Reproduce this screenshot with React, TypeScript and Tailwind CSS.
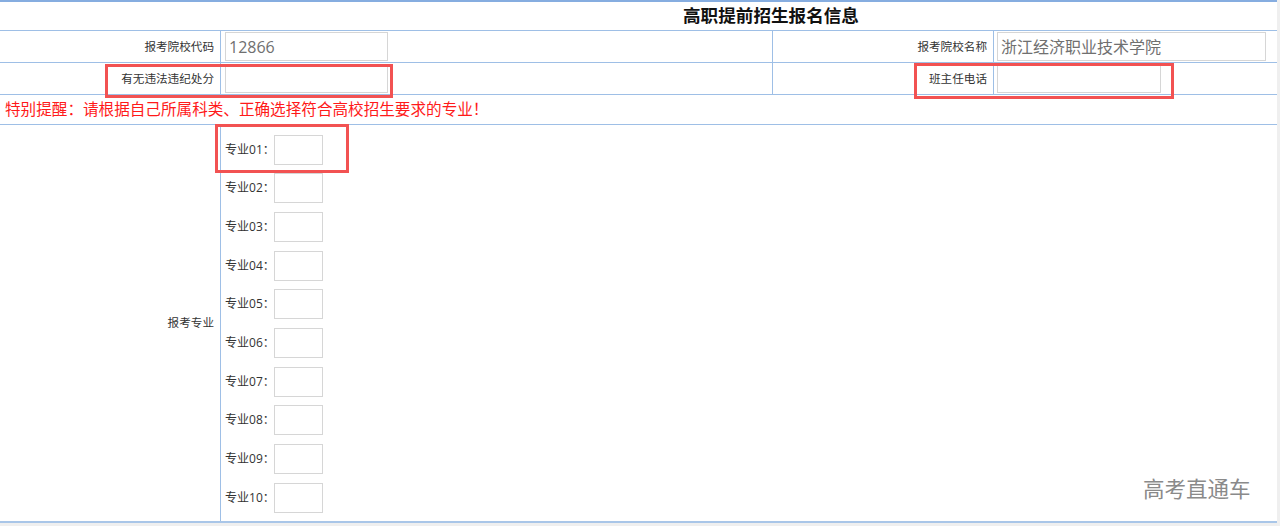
const font = "font-['Open_Sans','Noto_Sans_CJK_SC',sans-serif]";

const Label = ({ text, width = "w-[221px]" }: { text: string; width?: string }) => (
  <div
    className={`${width} shrink-0 h-full border-r border-[#9ebfe6] flex items-center justify-end pr-[6px] text-[11.6px] text-[#333] whitespace-nowrap`}
  >
    {text}
  </div>
);

const Field = ({ value, width }: { value?: string; width: string }) => (
  <div
    className={`${width} h-[29px] border border-[#d6d6d6] bg-white flex items-center pl-[3px] text-[16px] text-[#707070] leading-none whitespace-nowrap`}
  >
    {value}
  </div>
);

const majors = ["01", "02", "03", "04", "05", "06", "07", "08", "09", "10"];

export default function App() {
  return (
    <div className={`w-full h-[526px] bg-[#efefef] ${font}`}>
      <div className="relative w-[1277px] bg-white border-t-2 border-[#86ade0]">
        {/* title */}
        <div className="h-[29px] border-b border-[#9ebfe6] flex items-center pl-[683px] text-[17.6px] font-bold text-[#111] leading-none">
          高职提前招生报名信息
        </div>

        {/* row 1 */}
        <div className="h-[32px] border-b border-[#9ebfe6] flex items-center">
          <Label text="报考院校代码" />
          <div className="w-[552px] shrink-0 h-full border-r border-[#9ebfe6] flex items-center pl-[4px]">
            <Field value="12866" width="w-[163px]" />
          </div>
          <Label text="报考院校名称" />
          <div className="flex-1 h-full flex items-center pl-[3px]">
            <Field value="浙江经济职业技术学院" width="w-[269px]" />
          </div>
        </div>

        {/* row 2 */}
        <div className="h-[32px] border-b border-[#9ebfe6] flex items-center">
          <Label text="有无违法违纪处分" />
          <div className="w-[552px] shrink-0 h-full border-r border-[#9ebfe6] flex items-center pl-[4px]">
            <Field width="w-[163px]" />
          </div>
          <Label text="班主任电话" />
          <div className="flex-1 h-full flex items-center pl-[3px]">
            <Field width="w-[164px]" />
          </div>
        </div>

        {/* notice */}
        <div className="h-[30px] border-b border-[#9ebfe6] flex items-center pl-[5px] text-[15.6px] text-[#ff1a1a] whitespace-nowrap">
          特别提醒：请根据自己所属科类、正确选择符合高校招生要求的专业！
        </div>

        {/* majors */}
        <div className="h-[398px] border-b-2 border-[#a9c6e8] flex">
          <Label text="报考专业" />
          <div className="flex flex-col gap-[8.7px] pt-[9px] pl-[4px]">
            {majors.map((m) => (
              <div key={m} className="h-[30px] flex items-center pt-[1px]">
                <span className="w-[49px] shrink-0 text-[12px] text-[#333] whitespace-nowrap">专业{m}：</span>
                <div className="w-[49px] h-[30px] shrink-0 border border-[#d6d6d6]" />
              </div>
            ))}
          </div>
        </div>

        {/* annotation boxes */}
        <div className="absolute left-[105px] top-[62px] w-[288px] h-[34px] border-[3px] border-[#f25252]" />
        <div className="absolute left-[914px] top-[61px] w-[260px] h-[36px] border-[3px] border-[#f25252]" />
        <div className="absolute left-[215px] top-[122px] w-[134px] h-[49px] border-[3px] border-[#f25252]" />

        {/* watermark */}
        <div className="absolute left-[1143px] top-[472px] text-[21.5px] text-[#8a8a8a] font-['Noto_Sans_CJK_SC',sans-serif] leading-[28px]">
          高考直通车
        </div>
      </div>
    </div>
  );
}
